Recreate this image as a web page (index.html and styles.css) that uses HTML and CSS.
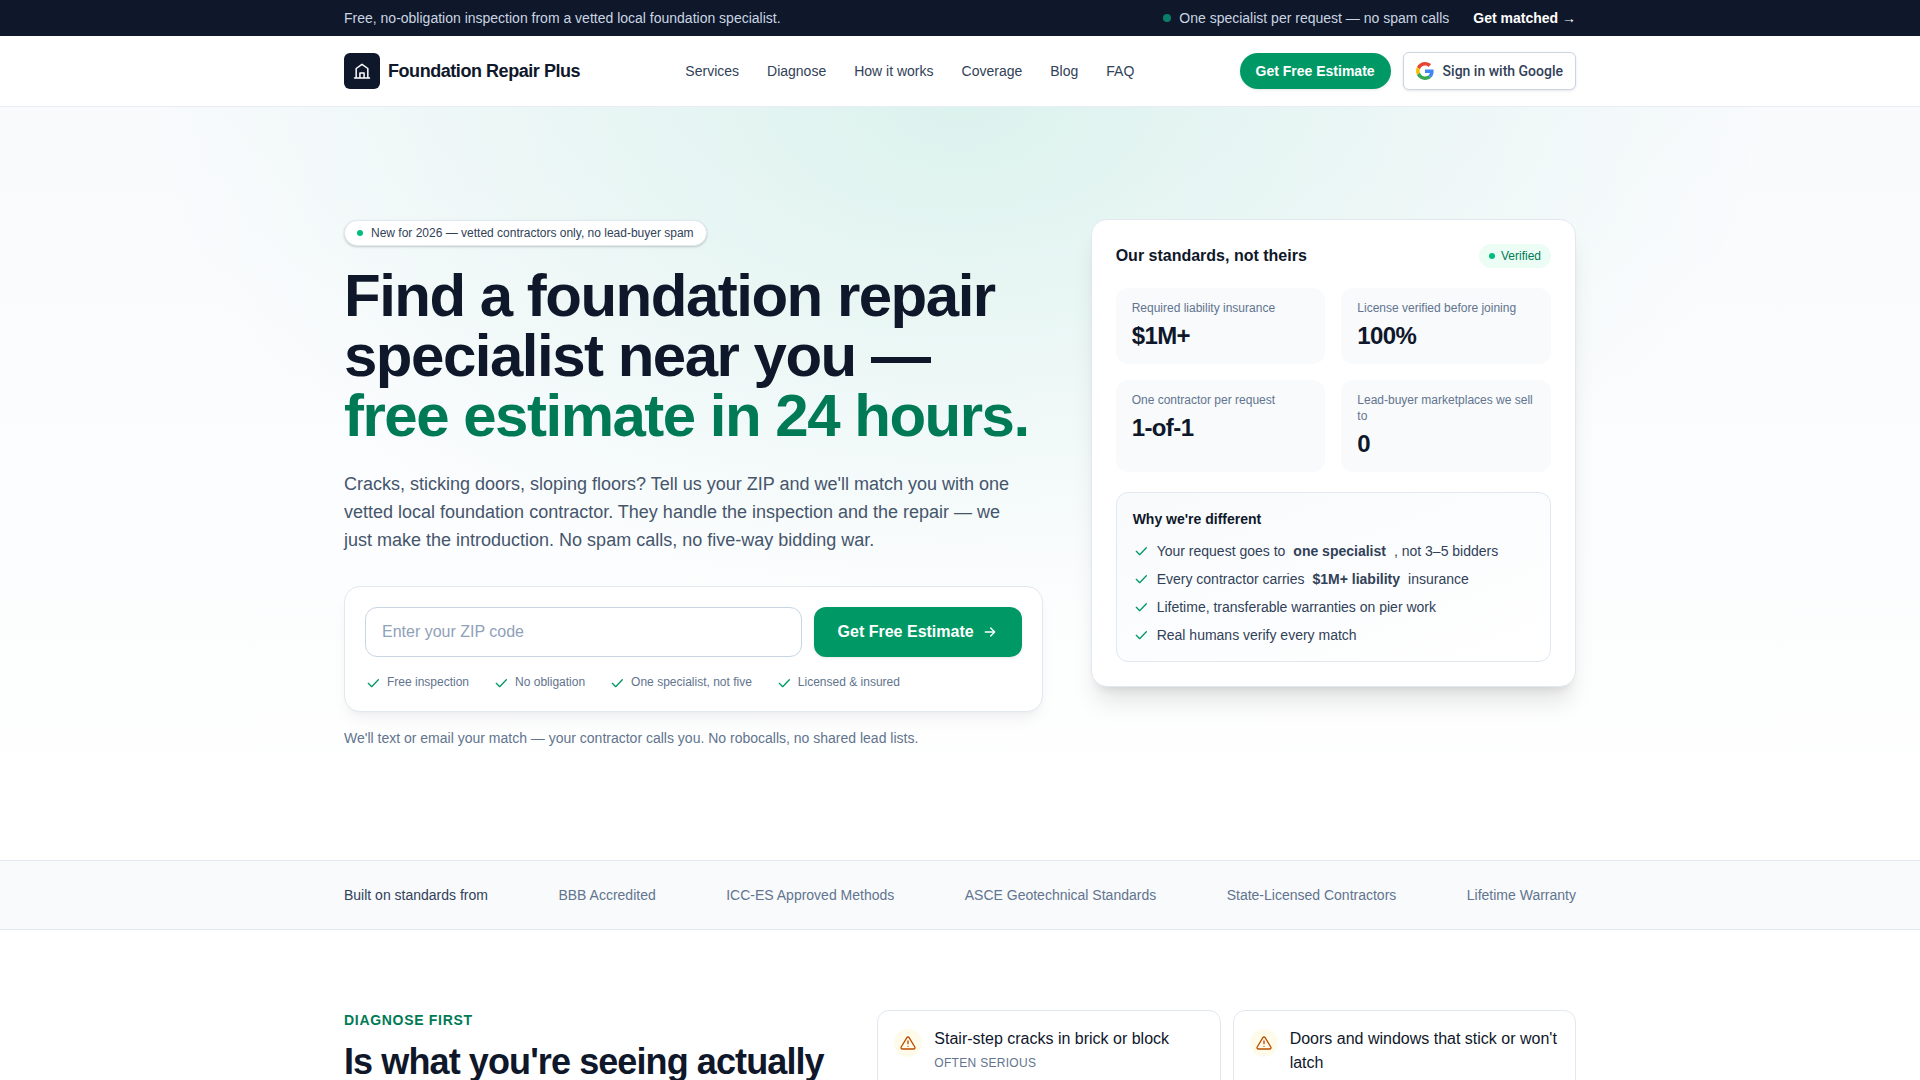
FILE: index.html
```html
<!DOCTYPE html>
<html lang="en">
<head>
    <meta charset="UTF-8">
    <meta name="viewport" content="width=device-width, initial-scale=1.0">
    <title>Foundation Repair Plus</title>
    <link rel="stylesheet" href="styles.css">
</head>
<body>
    <!-- shared icons -->
    <svg class="sprite" aria-hidden="true">
        <symbol id="icon-check" viewBox="0 0 24 24">
            <path d="M5 12.5l5 5L20 7" fill="none" stroke="currentColor" stroke-width="2" stroke-linecap="round" stroke-linejoin="round"/>
        </symbol>
        <symbol id="icon-warning" viewBox="0 0 24 24">
            <path d="M12 9v4M12 17h.01M10.3 3.9L1.8 18a2 2 0 0 0 1.7 3h17a2 2 0 0 0 1.7-3L13.7 3.9a2 2 0 0 0-3.4 0z" fill="none" stroke="currentColor" stroke-width="2" stroke-linecap="round" stroke-linejoin="round"/>
        </symbol>
    </svg>

    <div class="topbar">
        <div class="container topbar-inner">
            <p>Free, no-obligation inspection from a vetted local foundation specialist.</p>
            <div class="topbar-right">
                <span class="topbar-note"><span class="dot dot-dim"></span>One specialist per request — no spam calls</span>
                <a href="#match">Get matched →</a>
            </div>
        </div>
    </div>

    <header class="header">
        <div class="container header-inner">
            <a href="#" class="logo">
                <span class="logo-mark">
                    <svg width="20" height="20" viewBox="0 0 24 24" fill="none" stroke="currentColor" stroke-width="1.8" stroke-linecap="round" stroke-linejoin="round">
                        <path d="M3 20.5h18M5 20.5V9l7-5 7 5v11.5M9.5 20.5v-6h5v6"/>
                    </svg>
                </span>
                Foundation Repair Plus
            </a>
            <nav class="nav">
                <a href="#services">Services</a>
                <a href="#diagnose">Diagnose</a>
                <a href="#how">How it works</a>
                <a href="#coverage">Coverage</a>
                <a href="#blog">Blog</a>
                <a href="#faq">FAQ</a>
            </nav>
            <div class="header-actions">
                <a href="#match" class="btn-pill">Get Free Estimate</a>
                <button type="button" class="btn-google">
                    <svg width="18" height="18" viewBox="0 0 48 48">
                        <path fill="#EA4335" d="M24 9.5c3.54 0 6.71 1.22 9.21 3.6l6.85-6.85C35.9 2.38 30.47 0 24 0 14.62 0 6.51 5.38 2.56 13.22l7.98 6.19C12.43 13.72 17.74 9.5 24 9.5z"/>
                        <path fill="#4285F4" d="M46.98 24.55c0-1.57-.15-3.09-.38-4.55H24v9.02h12.94c-.58 2.96-2.26 5.48-4.78 7.18l7.73 6c4.51-4.18 7.09-10.36 7.09-17.65z"/>
                        <path fill="#FBBC05" d="M10.53 28.59c-.48-1.45-.76-2.99-.76-4.59s.27-3.14.76-4.59l-7.98-6.19C.92 16.46 0 20.12 0 24c0 3.88.92 7.54 2.56 10.78l7.97-6.19z"/>
                        <path fill="#34A853" d="M24 48c6.48 0 11.93-2.13 15.89-5.81l-7.73-6c-2.15 1.45-4.92 2.3-8.16 2.3-6.26 0-11.57-4.22-13.47-9.91l-7.98 6.19C6.51 42.62 14.62 48 24 48z"/>
                    </svg>
                    Sign in with Google
                </button>
            </div>
        </div>
    </header>

    <section class="hero">
        <div class="container hero-grid">
            <div class="hero-main">
                <p class="badge"><span class="dot dot-small"></span>New for 2026 — vetted contractors only, no lead-buyer spam</p>
                <h1>Find a foundation repair specialist near you — <span>free estimate in 24 hours.</span></h1>
                <p class="lead">Cracks, sticking doors, sloping floors? Tell us your ZIP and we'll match you with one vetted local foundation contractor. They handle the inspection and the repair — we just make the introduction. No spam calls, no five-way bidding war.</p>
                <form class="zip-form" id="match">
                    <div class="zip-row">
                        <input type="text" name="zip" inputmode="numeric" placeholder="Enter your ZIP code" aria-label="ZIP code">
                        <button type="submit">
                            Get Free Estimate
                            <svg width="16" height="16" viewBox="0 0 24 24" fill="none" stroke="currentColor" stroke-width="2" stroke-linecap="round" stroke-linejoin="round"><path d="M5 12h14M13 6l6 6-6 6"/></svg>
                        </button>
                    </div>
                    <ul class="zip-points">
                        <li><svg class="check"><use href="#icon-check"/></svg>Free inspection</li>
                        <li><svg class="check"><use href="#icon-check"/></svg>No obligation</li>
                        <li><svg class="check"><use href="#icon-check"/></svg>One specialist, not five</li>
                        <li><svg class="check"><use href="#icon-check"/></svg>Licensed &amp; insured</li>
                    </ul>
                </form>
                <p class="form-note">We'll text or email your match — your contractor calls you. No robocalls, no shared lead lists.</p>
            </div>

            <aside class="standards">
                <div class="standards-head">
                    <h2>Our standards, not theirs</h2>
                    <span class="verified"><span class="dot dot-small"></span>Verified</span>
                </div>
                <dl class="stats">
                    <div class="stat"><dt>Required liability insurance</dt><dd>$1M+</dd></div>
                    <div class="stat"><dt>License verified before joining</dt><dd>100%</dd></div>
                    <div class="stat"><dt>One contractor per request</dt><dd>1-of-1</dd></div>
                    <div class="stat"><dt>Lead-buyer marketplaces we sell to</dt><dd>0</dd></div>
                </dl>
                <div class="why">
                    <h3>Why we're different</h3>
                    <ul>
                        <li><svg class="check"><use href="#icon-check"/></svg>Your request goes to <strong>one specialist</strong>, not 3–5 bidders</li>
                        <li><svg class="check"><use href="#icon-check"/></svg>Every contractor carries <strong>$1M+ liability</strong> insurance</li>
                        <li><svg class="check"><use href="#icon-check"/></svg>Lifetime, transferable warranties on pier work</li>
                        <li><svg class="check"><use href="#icon-check"/></svg>Real humans verify every match</li>
                    </ul>
                </div>
            </aside>
        </div>
    </section>

    <section class="trust">
        <div class="container trust-inner">
            <span class="trust-label">Built on standards from</span>
            <span>BBB Accredited</span>
            <span>ICC-ES Approved Methods</span>
            <span>ASCE Geotechnical Standards</span>
            <span>State-Licensed Contractors</span>
            <span>Lifetime Warranty</span>
        </div>
    </section>

    <section class="diagnose" id="diagnose">
        <div class="container diagnose-grid">
            <div class="diagnose-intro">
                <p class="eyebrow">Diagnose first</p>
                <h2>Is what you're seeing actually serious?</h2>
            </div>
            <div class="symptoms">
                <a href="#stair-step" class="symptom">
                    <span class="symptom-icon"><svg width="16" height="16"><use href="#icon-warning"/></svg></span>
                    <span class="symptom-text">Stair-step cracks in brick or block<small>Often serious</small></span>
                </a>
                <a href="#doors" class="symptom">
                    <span class="symptom-icon"><svg width="16" height="16"><use href="#icon-warning"/></svg></span>
                    <span class="symptom-text">Doors and windows that stick or won't latch</span>
                </a>
            </div>
        </div>
    </section>
</body>
</html>
```

FILE: styles.css
```css
* {
    margin: 0;
    padding: 0;
    box-sizing: border-box;
}
html {
    scrollbar-width: none;
}
body {
    font-family: "Liberation Sans", Arial, sans-serif;
    font-size: 16px;
    line-height: 24px;
    color: #0f172a;
    background: #ffffff;
}
a {
    color: inherit;
    text-decoration: none;
}
ul {
    list-style: none;
}
svg {
    display: block;
    flex-shrink: 0;
}
.sprite {
    display: none;
}
.container {
    max-width: 1280px;
    margin: 0 auto;
    padding: 0 24px;
}
.dot {
    width: 8px;
    height: 8px;
    border-radius: 50%;
    background: #00bc7d;
}
.dot-small {
    width: 6px;
    height: 6px;
}
.dot-dim {
    background: #087f66;
}
.check {
    width: 16px;
    height: 16px;
    color: #009966;
}

/* top bar */
.topbar {
    background: #0f172a;
    color: #cad5e2;
    font-size: 14px;
    line-height: 20px;
}
.topbar-inner {
    display: flex;
    justify-content: space-between;
    padding-top: 8px;
    padding-bottom: 8px;
}
.topbar-right {
    display: flex;
    gap: 24px;
}
.topbar-right a {
    color: #ffffff;
    font-weight: bold;
}
.topbar-note {
    display: flex;
    align-items: center;
    gap: 8px;
}

/* header */
.header {
    background: #ffffff;
    border-bottom: 1px solid #e7edf2;
}
.header-inner {
    display: flex;
    align-items: center;
    justify-content: space-between;
    padding-top: 16px;
    padding-bottom: 16px;
}
.logo {
    display: flex;
    align-items: center;
    gap: 8px;
    font-size: 18px;
    font-weight: bold;
    letter-spacing: -0.025em;
}
.logo-mark {
    display: flex;
    align-items: center;
    justify-content: center;
    width: 36px;
    height: 36px;
    border-radius: 6px;
    background: #0f172a;
    color: #ffffff;
}
.nav {
    display: flex;
    gap: 28px;
    font-size: 14px;
    line-height: 20px;
    color: #314158;
}
.header-actions {
    display: flex;
    align-items: center;
    gap: 12px;
}
.btn-pill {
    padding: 8px 16px;
    border-radius: 18px;
    background: #009966;
    color: #ffffff;
    font-size: 14px;
    font-weight: bold;
    line-height: 20px;
    box-shadow: 0 1px 3px rgba(0, 0, 0, 0.1);
}
.btn-google {
    display: flex;
    align-items: center;
    gap: 9px;
    height: 38px;
    padding: 0 12px;
    border: 1px solid #cad5e2;
    border-radius: 6px;
    background: #ffffff;
    color: #314158;
    font-family: Roboto, Arial, sans-serif;
    font-size: 14px;
    font-weight: 500;
    box-shadow: 0 1px 3px rgba(0, 0, 0, 0.1);
    cursor: pointer;
}

/* hero */
.hero {
    padding: 112px 0;
    background:
        radial-gradient(ellipse 42% 68% at top, rgba(16, 185, 129, 0.12), rgba(16, 185, 129, 0)),
        linear-gradient(to bottom, #f8fafc, #ffffff);
}
.hero-grid {
    display: grid;
    grid-template-columns: repeat(12, 1fr);
    gap: 48px;
    align-items: start;
}
.hero-main {
    grid-column: span 7;
    padding-top: 1px;
}
.badge {
    display: flex;
    align-items: center;
    gap: 8px;
    width: fit-content;
    padding: 4px 12px;
    border: 1px solid #e2e8f0;
    border-radius: 13px;
    background: #ffffff;
    color: #314158;
    font-size: 12px;
    line-height: 16px;
    box-shadow: 0 1px 3px rgba(0, 0, 0, 0.1), 0 1px 2px rgba(0, 0, 0, 0.1);
}
h1 {
    margin-top: 20px;
    font-size: 60px;
    line-height: 60px;
    letter-spacing: -0.025em;
}
h1 span {
    color: #007a55;
}
.lead {
    max-width: 672px;
    margin-top: 24px;
    font-size: 18px;
    line-height: 28px;
    color: #45556c;
}
.zip-form {
    margin-top: 32px;
    padding: 20px;
    border: 1px solid #e2e8f0;
    border-radius: 16px;
    background: #ffffff;
    box-shadow: 0 10px 15px -3px rgba(15, 23, 42, 0.05), 0 4px 6px -4px rgba(15, 23, 42, 0.05);
}
.zip-row {
    display: flex;
    gap: 12px;
}
.zip-row input {
    flex: 1;
    min-width: 0;
    height: 50px;
    padding: 0 16px;
    border: 1px solid #cad5e2;
    border-radius: 12px;
    background: #ffffff;
    color: #0f172a;
    font: inherit;
}
.zip-row input::placeholder {
    color: #90a1b9;
}
.zip-row button {
    display: flex;
    align-items: center;
    gap: 8px;
    height: 50px;
    padding: 0 24px;
    border: none;
    border-radius: 12px;
    background: #009966;
    color: #ffffff;
    font: inherit;
    font-weight: bold;
    box-shadow: 0 1px 3px rgba(0, 0, 0, 0.1);
    cursor: pointer;
}
.zip-points {
    display: flex;
    flex-wrap: wrap;
    gap: 8px 24px;
    margin-top: 16px;
    font-size: 12px;
    line-height: 16px;
    color: #62748e;
}
.zip-points li {
    display: flex;
    align-items: center;
    gap: 6px;
}
.zip-points .check {
    margin-top: 2px;
}
.form-note {
    margin-top: 16px;
    font-size: 14px;
    line-height: 20px;
    color: #62748e;
}

/* standards card */
.standards {
    grid-column: span 5;
    padding: 24px;
    border: 1px solid #e2e8f0;
    border-radius: 16px;
    background: #ffffff;
    box-shadow: 0 20px 25px -5px rgba(0, 0, 0, 0.1), 0 8px 10px -6px rgba(0, 0, 0, 0.1);
}
.standards-head {
    display: flex;
    align-items: center;
    justify-content: space-between;
}
.standards-head h2 {
    font-size: 16px;
    line-height: 24px;
}
.verified {
    display: flex;
    align-items: center;
    gap: 6px;
    padding: 4px 10px;
    border-radius: 12px;
    background: #ecfdf5;
    color: #007a55;
    font-size: 12px;
    line-height: 16px;
}
.stats {
    display: grid;
    grid-template-columns: 1fr 1fr;
    gap: 16px;
    margin-top: 20px;
}
.stat {
    padding: 12px 16px;
    border-radius: 12px;
    background: #f8fafc;
}
.stat dt {
    font-size: 12px;
    line-height: 16px;
    color: #62748e;
}
.stat dd {
    margin-top: 4px;
    font-size: 24px;
    font-weight: bold;
    line-height: 32px;
    letter-spacing: -0.025em;
}
.why {
    margin-top: 20px;
    padding: 16px;
    border: 1px solid #e2e8f0;
    border-radius: 12px;
    background: linear-gradient(to bottom right, #f8fafc, #ffffff);
    font-size: 14px;
    line-height: 20px;
}
.why h3 {
    font-size: 14px;
}
.why ul {
    margin-top: 12px;
    color: #314158;
}
.why li {
    display: flex;
    align-items: center;
    gap: 8px;
}
.why li + li {
    margin-top: 8px;
}

/* trust bar */
.trust {
    border-top: 1px solid #e2e8f0;
    border-bottom: 1px solid #e2e8f0;
    background: #f8fafc;
}
.trust-inner {
    display: flex;
    flex-wrap: wrap;
    justify-content: space-between;
    gap: 12px 32px;
    padding-top: 24px;
    padding-bottom: 24px;
    font-size: 14px;
    line-height: 20px;
    color: #62748e;
}
.trust-label {
    color: #314158;
}

/* diagnose */
.diagnose {
    padding: 80px 0;
}
.diagnose-grid {
    display: grid;
    grid-template-columns: repeat(12, 1fr);
    gap: 48px;
}
.diagnose-intro {
    grid-column: span 5;
}
.eyebrow {
    font-size: 14px;
    font-weight: bold;
    line-height: 20px;
    letter-spacing: 0.05em;
    text-transform: uppercase;
    color: #007a55;
}
.diagnose-intro h2 {
    margin-top: 12px;
    font-size: 36px;
    line-height: 40px;
    letter-spacing: -0.025em;
}
.symptoms {
    grid-column: span 7;
    display: grid;
    grid-template-columns: 1fr 1fr;
    gap: 12px;
}
.symptom {
    display: flex;
    align-items: flex-start;
    gap: 12px;
    padding: 16px;
    border: 1px solid #e2e8f0;
    border-radius: 12px;
    background: #ffffff;
}
.symptom-icon {
    display: flex;
    align-items: center;
    justify-content: center;
    flex-shrink: 0;
    width: 28px;
    height: 28px;
    margin-top: 2px;
    border-radius: 50%;
    background: #fffbeb;
    color: #bb4d00;
}
.symptom small {
    display: block;
    margin-top: 4px;
    font-size: 12px;
    line-height: 16px;
    letter-spacing: 0.025em;
    text-transform: uppercase;
    color: #62748e;
}
```
